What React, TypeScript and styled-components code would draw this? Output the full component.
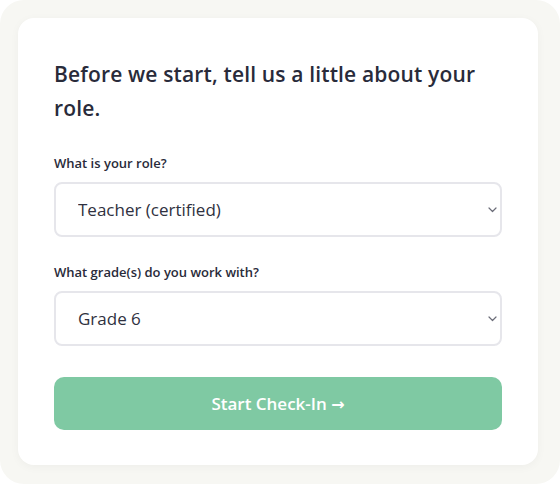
import styled, { createGlobalStyle } from 'styled-components'

const GlobalStyle = createGlobalStyle`
  html, body {
    margin: 0;
    padding: 0;
    background: #ffffff;
  }
  body {
    font-family: "Open Sans", "Noto Sans", sans-serif;
  }
`

const roles = ['Teacher (certified)', 'Teacher (uncertified)', 'Administrator', 'Counselor']
const grades = ['Grade 4', 'Grade 5', 'Grade 6', 'Grade 7', 'Grade 8']

const Chevron = () => (
  <ChevronIcon width="9" height="6" viewBox="0 0 9 6" aria-hidden>
    <path d="M1 1l3.5 3.5L8 1" fill="none" stroke="#6b6c78" strokeWidth="1.2" strokeLinecap="round" strokeLinejoin="round" />
  </ChevronIcon>
)

export default function App() {
  return (
    <>
      <GlobalStyle />
      <Page>
        <Card>
          <Title>Before we start, tell us a little about your role.</Title>
          <Field>
            <Label htmlFor="role">What is your role?</Label>
            <SelectWrap>
              <Select id="role" defaultValue="Teacher (certified)">
                {roles.map((r) => (
                  <option key={r}>{r}</option>
                ))}
              </Select>
              <Chevron />
            </SelectWrap>
          </Field>
          <Field>
            <Label htmlFor="grade">What grade(s) do you work with?</Label>
            <SelectWrap>
              <Select id="grade" defaultValue="Grade 6">
                {grades.map((g) => (
                  <option key={g}>{g}</option>
                ))}
              </Select>
              <Chevron />
            </SelectWrap>
          </Field>
          <StartButton type="button">
            Start Check-In <Arrow>→</Arrow>
          </StartButton>
        </Card>
      </Page>
    </>
  )
}

const Page = styled.div`
  width: 560px;
  height: 484px;
  box-sizing: border-box;
  padding: 18px 22px 19px 18px;
  background: #f7f7f3;
  border-radius: 24px;
`

const Card = styled.div`
  box-sizing: border-box;
  height: 100%;
  background: #ffffff;
  border-radius: 16px;
  box-shadow: 0 2px 10px rgba(0, 0, 0, 0.04);
  padding: 39px 36px 35px;
  display: flex;
  flex-direction: column;
`

const Title = styled.h1`
  margin: 0 0 29px;
  font-size: 21px;
  line-height: 34px;
  font-weight: 600;
  color: #292b3a;
  letter-spacing: 0.15px;
`

const Field = styled.div`
  display: flex;
  flex-direction: column;
  gap: 10px;
  margin-bottom: 26px;
`

const Label = styled.label`
  font-size: 13px;
  line-height: 18px;
  font-weight: 600;
  color: #292b3a;
`

const SelectWrap = styled.div`
  position: relative;
  display: flex;
`

const Select = styled.select`
  flex: 1;
  height: 55px;
  padding: 0 24px 0 22px;
  border: 2px solid #e6e6eb;
  border-radius: 8px;
  background: #ffffff;
  appearance: none;
  font-family: "Open Sans", "Noto Sans", sans-serif;
  font-size: 17px;
  color: #2f3140;
  outline: none;
`

const ChevronIcon = styled.svg`
  position: absolute;
  right: 5px;
  top: 50%;
  transform: translateY(-50%);
  pointer-events: none;
`

const StartButton = styled.button`
  margin-top: 5px;
  height: 53px;
  border: none;
  border-radius: 10px;
  background: #7fc9a3;
  color: #ffffff;
  font-family: "Open Sans", "Noto Sans", sans-serif;
  font-size: 17px;
  font-weight: 600;
  cursor: pointer;
`

const Arrow = styled.span`
  font-family: "DejaVu Sans", sans-serif;
  font-size: 16px;
`
